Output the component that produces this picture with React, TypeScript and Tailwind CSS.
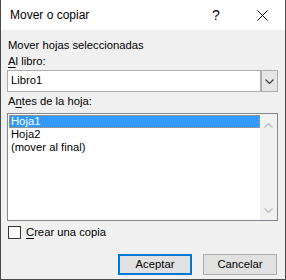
import React from "react";

export default function App() {
  const font = { fontFamily: '"Liberation Sans", Arial, sans-serif' };
  return (
    <div
      className="w-[286px] h-[280px] flex flex-col border-x border-b border-[#4a4a4a] bg-[#f0f0f0] text-[11.25px] text-black overflow-hidden"
      style={font}
    >
      <div className="h-[30px] bg-white flex items-center shrink-0">
        <div className="pl-[9px] text-[12px] leading-none text-[#000] flex-1">Mover o copiar</div>
        <div className="w-[46px] text-center text-[14px] leading-none">?</div>
        <div className="w-[46px] flex justify-center">
          <svg width="11" height="11" viewBox="0 0 11 11">
            <path d="M0.5 0.5 L10.5 10.5 M10.5 0.5 L0.5 10.5" stroke="#000" strokeWidth="1" />
          </svg>
        </div>
      </div>
      <div className="flex flex-col pl-[6px] pr-[7px] pt-[8px]">
        <div className="leading-[15px] pl-[1px]">Mover hojas seleccionadas</div>
        <div className="leading-[15px] pl-[1px] mt-[1px]">
          <span className="underline underline-offset-2">A</span>l libro:
        </div>
        <div className="mt-[1px] h-[22px] flex border border-[#adadad] bg-white">
          <div className="flex-1 pl-[3px] flex items-center leading-none">Libro1</div>
          <div className="w-[17px] bg-[#e5e5e5] border-l-2 border-[#adadad] flex items-center justify-center">
            <svg width="9" height="5" viewBox="0 0 9 5">
              <path d="M0.5 0.5 L4.5 4.5 L8.5 0.5" stroke="#404040" fill="none" strokeWidth="1.2" />
            </svg>
          </div>
        </div>
        <div className="leading-[15px] pl-[1px] mt-[2px]">
          A<span className="underline underline-offset-2">n</span>tes de la hoja:
        </div>
        <div className="mt-[4px] h-[108px] flex border border-[#828790] bg-white">
          <div className="flex-1 pt-[1px] pl-[1px] flex flex-col">
            <div className="h-[13px] bg-[#3399ff] text-white leading-[11px] pl-[1px] border border-dotted border-[#e08a3c]">
              Hoja1
            </div>
            <div className="h-[13px] leading-[13px] pl-[2px]">Hoja2</div>
            <div className="h-[13px] leading-[13px] pl-[2px]">(mover al final)</div>
          </div>
          <div className="w-[17px] bg-[#f0f0f0] flex flex-col items-center justify-between pt-[9px] pb-[7px]">
            <svg width="9" height="5" viewBox="0 0 9 5">
              <path d="M0.5 4.5 L4.5 0.5 L8.5 4.5" stroke="#c2c2c2" fill="none" strokeWidth="1.5" />
            </svg>
            <svg width="9" height="5" viewBox="0 0 9 5">
              <path d="M0.5 0.5 L4.5 4.5 L8.5 0.5" stroke="#c2c2c2" fill="none" strokeWidth="1.5" />
            </svg>
          </div>
        </div>
        <div className="mt-[4px] flex items-center">
          <div className="w-[13px] h-[13px] border border-[#333] bg-white ml-[1px]" />
          <div className="ml-[5px] leading-[15px]">
            <span className="underline underline-offset-2">C</span>rear una copia
          </div>
        </div>
        <div className="mt-[14px] flex justify-end gap-[11px] pr-[1px]">
          <div className="w-[74px] h-[21px] border-2 border-[#0078d7] bg-[#e1e1e1] flex items-center justify-center leading-none">
            Aceptar
          </div>
          <div className="w-[74px] h-[21px] border border-[#adadad] bg-[#e1e1e1] flex items-center justify-center leading-none">
            Cancelar
          </div>
        </div>
      </div>
    </div>
  );
}
